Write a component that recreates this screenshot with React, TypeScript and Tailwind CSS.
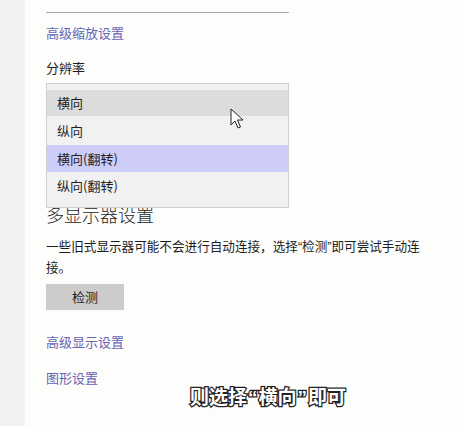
import React from "react";

const font = { fontFamily: '"Noto Sans CJK SC", "Noto Sans", sans-serif' };
const q = { fontFamily: '"Liberation Sans", sans-serif' };

export default function App() {
  return (
    <div className="relative flex w-[462px] h-[426px] overflow-hidden bg-white" style={font}>
      <div className="w-[25px] h-full bg-[#f2f2f2]" />
      <div className="flex-1 h-full bg-[#fdfdfc] pl-[21px] flex flex-col">
        <div className="mt-[12px] h-px w-[243px] bg-[#a8a8a8]" />
        <div className="mt-[10px] h-[20px] leading-[20px] text-[13px] text-[#6664b4]">高级缩放设置</div>
        <div className="mt-[15px] h-[20px] leading-[20px] text-[13px] text-[#1e1e1e]">分辨率</div>
        <div className="relative h-[124px]">
          <div className="absolute z-10 left-0 top-[5px] w-[243px] h-[125px] bg-[#f1f1f1] border border-[#cfcfcf] pt-[6px] flex flex-col text-[13px] text-[#1e1e1e]">
            <div className="h-[26px] leading-[26px] pl-[10px] bg-[#dcdcdc]">横向</div>
            <div className="h-[29px] leading-[29px] pl-[10px]">纵向</div>
            <div className="h-[27px] leading-[27px] pl-[10px] bg-[#cdcdf8]">横向(翻转)</div>
            <div className="h-[28px] leading-[28px] pl-[10px]">纵向(翻转)</div>
            <svg className="absolute left-[183px] top-[24px]" width="16" height="22" viewBox="0 0 16 22">
              <path d="M1 1 L1 17 L5 13 L8 20 L10.5 19 L7.5 12 L13 12 Z" fill="#ffffff" stroke="#222" strokeWidth="1" strokeLinejoin="round" />
            </svg>
          </div>
        </div>
        <div className="h-[24px] leading-[24px] text-[18px] font-light text-[#1e1e1e]">多显示器设置</div>
        <div className="mt-[10px] leading-[20px] text-[12.6px] text-[#1e1e1e]">
          一些旧式显示器可能不会进行自动连接，选择<span style={q}>“</span>检测<span style={q}>”</span>即可尝试手动连<br />接。
        </div>
        <div className="mt-[7px] w-[78px] h-[26px] bg-[#cccccc] flex items-center justify-center text-[13px] text-[#1e1e1e]">检测</div>
        <div className="mt-[22px] h-[20px] leading-[20px] text-[13px] text-[#6664b4]">高级显示设置</div>
        <div className="mt-[16px] h-[20px] leading-[20px] text-[13px] text-[#6664b4]">图形设置</div>
      </div>
      <div
        className="absolute left-[268px] -translate-x-1/2 top-[384px] whitespace-nowrap text-[19px] font-bold leading-[24px] text-white"
        style={{ WebkitTextStroke: "2.5px #222", paintOrder: "stroke fill" }}
      >
        则选择<span className="mx-[1px]" style={q}>“</span>横向<span className="mx-[1px]" style={q}>”</span>即可
      </div>
    </div>
  );
}
